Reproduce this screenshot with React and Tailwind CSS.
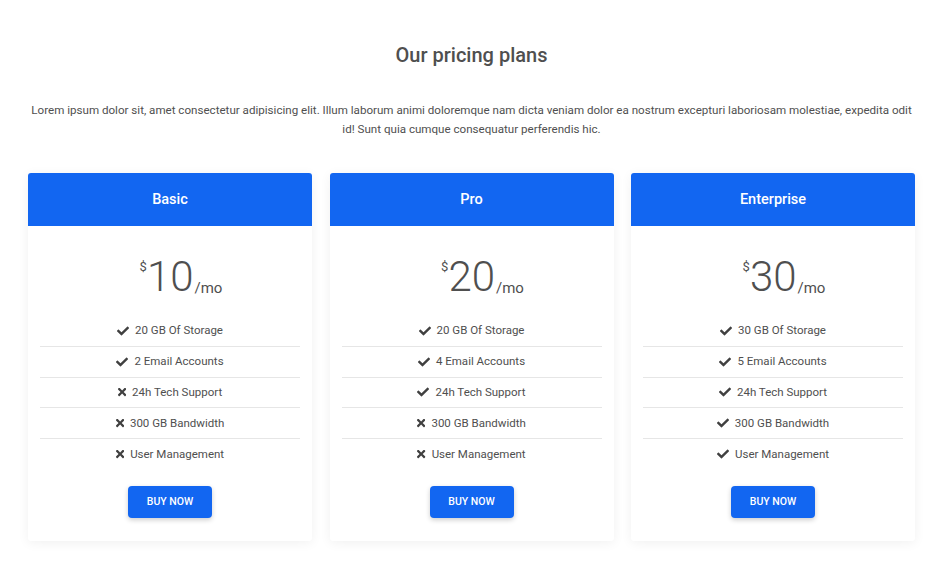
import React from "react";
import { FaCheck, FaTimes } from "react-icons/fa";

const plans = [
  {
    name: "Basic",
    price: "10",
    features: [
      ["20 GB Of Storage", true],
      ["2 Email Accounts", true],
      ["24h Tech Support", false],
      ["300 GB Bandwidth", false],
      ["User Management", false],
    ],
  },
  {
    name: "Pro",
    price: "20",
    features: [
      ["20 GB Of Storage", true],
      ["4 Email Accounts", true],
      ["24h Tech Support", true],
      ["300 GB Bandwidth", false],
      ["User Management", false],
    ],
  },
  {
    name: "Enterprise",
    price: "30",
    features: [
      ["30 GB Of Storage", true],
      ["5 Email Accounts", true],
      ["24h Tech Support", true],
      ["300 GB Bandwidth", true],
      ["User Management", true],
    ],
  },
];

function Card({ plan }) {
  return (
    <div className="flex flex-col bg-white rounded-[3px] shadow-[0_2px_12px_rgba(0,0,0,0.06)]">
      <div className="h-[53px] flex items-center justify-center bg-[#1266f1] rounded-t-[3px] text-white text-[14.5px] font-medium">
        {plan.name}
      </div>
      <div className="px-[12px] pb-[23px] flex flex-col">
        <div className="h-[90px] pt-[30px] pl-[22px] flex justify-center text-[#4f4f4f]">
          <div className="flex items-baseline leading-none">
            <span className="relative top-[-20px] text-[13px] font-normal">$</span>
            <span className="text-[42px] font-light leading-none">{plan.price}</span>
            <span className="relative top-[2px] text-[15px] font-normal ml-[1px]">/mo</span>
          </div>
        </div>
        <ul className="flex flex-col">
          {plan.features.map(([label, ok], i) => (
            <li
              key={label}
              className={`h-[30.75px] flex items-center justify-center gap-[6px] text-[11.5px] text-[#4f4f4f] ${
                i < plan.features.length - 1 ? "border-b border-[#e6e6e6]" : ""
              }`}
            >
              {ok ? (
                <FaCheck className="w-[12px] h-[12px] text-[#404040]" />
              ) : (
                <FaTimes className="w-[8.25px] h-[12px] text-[#404040]" />
              )}
              <span>{label}</span>
            </li>
          ))}
        </ul>
        <div className="flex justify-center mt-[16px]">
          <button className="w-[84px] h-[32px] rounded-[4px] bg-[#1266f1] text-white text-[10.5px] font-medium uppercase shadow-[0_2px_5px_rgba(0,0,0,0.2)]">
            Buy now
          </button>
        </div>
      </div>
    </div>
  );
}

export default function App() {
  return (
    <div className="min-h-[583px] bg-white font-['Roboto',sans-serif] pl-[28px] pr-[35px] pt-[41px]">
      <h2 className="text-center text-[20px] font-medium text-[#4f4f4f] leading-[28px]">
        Our pricing plans
      </h2>
      <p className="mt-[32px] text-center text-[11.6px] leading-[19px] text-[#4f4f4f]">
        Lorem ipsum dolor sit, amet consectetur adipisicing elit. Illum laborum animi doloremque nam dicta veniam dolor ea nostrum excepturi laboriosam molestiae, expedita odit id! Sunt quia cumque consequatur perferendis hic.
      </p>
      <div className="mt-[34px] grid grid-cols-3 gap-[17.5px]">
        {plans.map((p) => (
          <Card key={p.name} plan={p} />
        ))}
      </div>
    </div>
  );
}
